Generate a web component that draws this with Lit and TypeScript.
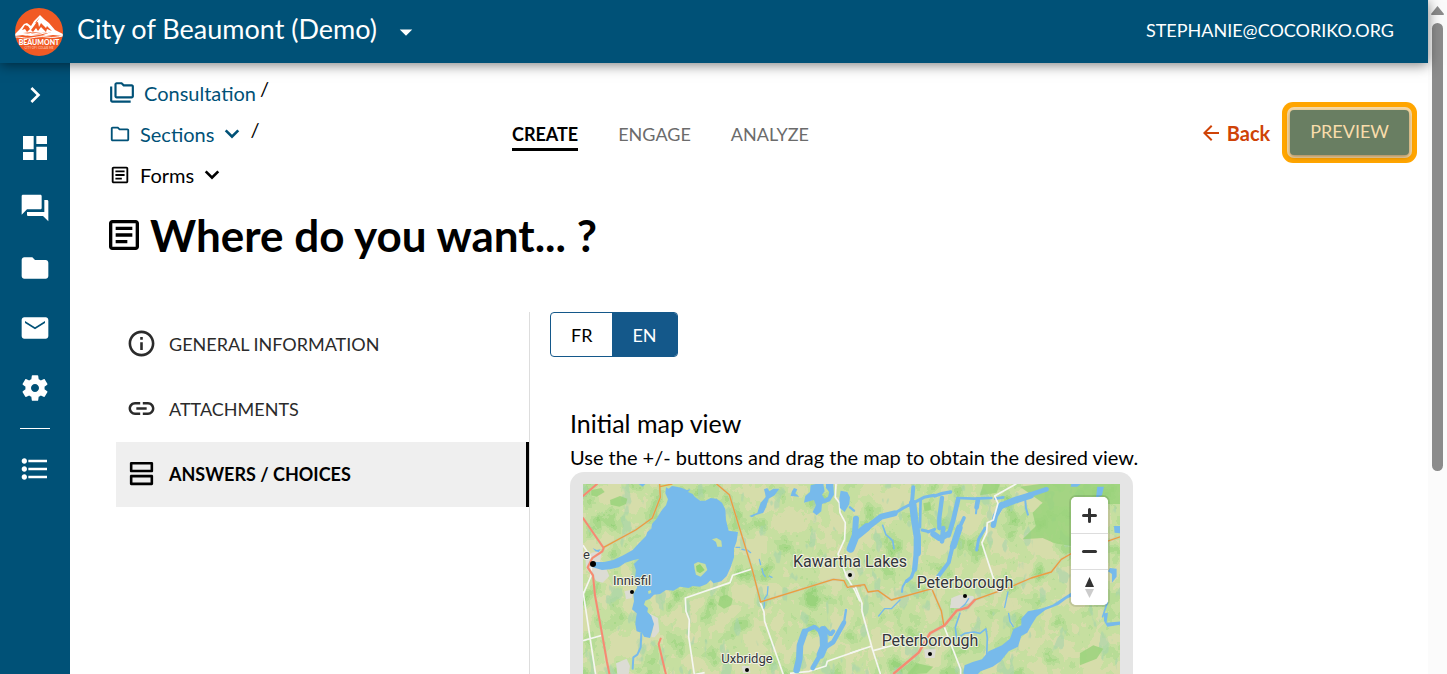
import { LitElement, html, css, svg } from "lit";
import { customElement, property, state } from "lit/decorators.js";
import { classMap } from "lit/directives/class-map.js";

const ICONS: Record<string, string> = {
  chevronRight: "M10 6L8.59 7.41 13.17 12l-4.58 4.59L10 18l6-6z",
  chevronDown: "M16.59 8.09L12 12.67 7.41 8.09 5.8 9.7l6.2 6.2 6.2-6.2z",
  dropDown: "M7 10l5 5 5-5z",
  dashboard: "M3 13h8V3H3v10zm0 8h8v-6H3v6zm10 0h8V11h-8v10zm0-18v6h8V3h-8z",
  forum:
    "M21 6h-2v9H6v2c0 .55.45 1 1 1h11l4 4V7c0-.55-.45-1-1-1zm-4 6V3c0-.55-.45-1-1-1H3c-.55 0-1 .45-1 1v14l4-4h10c.55 0 1-.45 1-1z",
  folder:
    "M10 4H4c-1.1 0-1.99.9-1.99 2L2 18c0 1.1.9 2 2 2h16c1.1 0 2-.9 2-2V8c0-1.1-.9-2-2-2h-8l-2-2z",
  mail: "M20 4H4c-1.1 0-2 .9-2 2v12c0 1.1.9 2 2 2h16c1.1 0 2-.9 2-2V6c0-1.1-.9-2-2-2zm-.5 4.2L12 13 4.5 8.200V6.700l7.500 4.700 7.500-4.700v1.500z",
  settings:
    "M19.14 12.94c.04-.3.06-.61.06-.94 0-.32-.02-.64-.07-.94l2.03-1.58c.18-.14.23-.41.12-.61l-1.92-3.32c-.12-.22-.37-.29-.59-.22l-2.39.96c-.5-.38-1.03-.7-1.62-.94l-.36-2.54c-.04-.24-.24-.41-.48-.41h-3.84c-.24 0-.43.17-.47.41l-.36 2.54c-.59.24-1.13.57-1.62.94l-2.39-.96c-.22-.08-.47 0-.59.22L2.74 8.87c-.12.21-.08.47.12.61l2.03 1.58c-.05.3-.09.63-.09.94s.02.64.07.94l-2.03 1.58c-.18.14-.23.41-.12.61l1.92 3.32c.12.22.37.29.59.22l2.39-.96c.5.38 1.03.7 1.62.94l.36 2.54c.05.24.24.41.48.41h3.84c.24 0 .44-.17.47-.41l.36-2.54c.59-.24 1.13-.56 1.62-.94l2.39.96c.22.08.47 0 .59-.22l1.92-3.32c.12-.22.07-.47-.12-.61l-2.01-1.58zM12 15c-1.65 0-3-1.35-3-3s1.350-3 3-3 3 1.350 3 3-1.350 3-3 3z",
  list: "M4 10c-1.100 0-2 .9-2 2s.9 2 2 2 2-.9 2-2-.9-2-2-2zm0-6c-1.100 0-2 .9-2 2s.9 2 2 2 2-.9 2-2-.9-2-2-2zm0 12c-1.100 0-2 .9-2 2s.9 2 2 2 2-.9 2-2-.9-2-2-2zM7 19h14v-2H7v2zm0-6h14v-2H7v2zm0-8v2h14V5H7z",
  article:
    "M19 5v14H5V5h14m0-2H5c-1.1 0-2 .9-2 2v14c0 1.1.9 2 2 2h14c1.1 0 2-.9 2-2V5c0-1.1-.9-2-2-2z M14 17H7v-2h7v2zm3-4H7v-2h10v2zm0-4H7V7h10v2z",
  folderOutline:
    "M9.170 6l2 2H20v10H4V6h5.170M10 4H4c-1.1 0-1.99.9-1.99 2L2 18c0 1.1.9 2 2 2h16c1.1 0 2-.9 2-2V8c0-1.1-.9-2-2-2h-8l-2-2z",
  folderCopy:
    "M3 6H1v13c0 1.1.9 2 2 2h17v-2H3V6z M21 4h-7l-2-2H7c-1.1 0-1.99.9-1.99 2L5 15c0 1.1.9 2 2 2h14c1.1 0 2-.9 2-2V6c0-1.1-.9-2-2-2zm0 11H7V4h4.170l2 2H21v9z",
  info: "M11 7h2v2h-2zm0 4h2v6h-2zm1-9C6.480 2 2 6.480 2 12s4.480 10 10 10 10-4.480 10-10S17.520 2 12 2zm0 18c-4.410 0-8-3.590-8-8s3.590-8 8-8 8 3.590 8 8-3.590 8-8 8z",
  link: "M3.900 12c0-1.710 1.390-3.100 3.100-3.100h4V7H7c-2.760 0-5 2.240-5 5s2.240 5 5 5h4v-1.900H7c-1.710 0-3.100-1.390-3.100-3.100zM8 13h8v-2H8v2zm9-6h-4v1.900h4c1.710 0 3.100 1.390 3.100 3.100s-1.390 3.100-3.100 3.100h-4V17h4c2.760 0 5-2.240 5-5s-2.240-5-5-5z",
  agenda:
    "M19 15v4H5v-4h14m1-2H4c-.55 0-1 .45-1 1v6c0 .55.45 1 1 1h16c.55 0 1-.45 1-1v-6c0-.55-.45-1-1-1zM19 5v4H5V5h14m1-2H4c-.55 0-1 .45-1 1v6c0 .55.45 1 1 1h16c.55 0 1-.45 1-1V4c0-.55-.45-1-1-1z",
  arrowBack: "M20 11H7.830l5.590-5.590L12 4l-8 8 8 8 1.410-1.410L7.830 13H20v-2z",
};

@customElement("ui-icon")
class UiIcon extends LitElement {
  @property() name = "";
  @property({ type: Number }) size = 24;
  static styles = css`
    :host { display: inline-flex; flex: none; }
    svg { fill: currentColor; display: block; }
  `;
  render() {
    return html`<svg width=${this.size} height=${this.size} viewBox="0 0 24 24" aria-hidden="true">
      <path d=${ICONS[this.name] ?? ""}></path>
    </svg>`;
  }
}

@customElement("city-logo")
class CityLogo extends LitElement {
  static styles = css`
    :host { display: inline-flex; flex: none; }
    svg { display: block; }
    .name { font: 900 7px Lato, sans-serif; fill: #fff; }
    .motto { font: 700 3px Lato, sans-serif; fill: #f9b49a; }
  `;
  render() {
    return html`<svg width="48" height="48" viewBox="0 0 48 48" role="img" aria-label="Beaumont">
      <defs><clipPath id="disc"><circle cx="24" cy="24" r="24"></circle></clipPath></defs>
      <g clip-path="url(#disc)">
        <rect width="48" height="48" fill="#f15a24"></rect>
        <path fill="#fff" d="M0 26L5 21 9 16 12 15 16 18 19 13 25 7 29 11 34 15 40 22 48 26 48 28 38 27 31 28 24 27 16 28 8 27 0 28z"></path>
        <path fill="#f15a24" d="M25 9l-5 6 3-1 1 5 2-4 5 5 1-2 5 5-5-2-1 3-5-5-3 4-2-3-3 4-2-2 3-4zM10 17l-3 5 3-1 2 3 3-3-2-3zM8 25l10-1 8 1 10-1-8 3z"></path>
        <path fill="none" stroke="#fff" stroke-width="1" d="M0 29c8 0 10 2 16 1s10-2 16-1 10 0 16-1M3 26l8 1 6-2 8 1 10-2"></path>
        <text class="name" x="24" y="37" text-anchor="middle">BEAUMONT</text>
        <text class="motto" x="24" y="41" text-anchor="middle">CITY OF I COLAB ME</text>
      </g>
    </svg>`;
  }
}

const WEST_LAKES = [
  "M318 52L326 56 336 48 350 50 366 54 380 60 392 58 384 66 398 72 404 80 420 92 436 92 452 84 470 86 486 98 496 118 498 150 506 182 534 186 530 214 522 236 522 262 512 292 500 318 484 334 460 340 452 330 440 342 420 350 398 348 386 354 360 350 340 362 318 360 300 372 282 374 270 386 256 392 252 404 264 414 262 426 274 438 282 462 276 484 270 504 252 500 246 488 230 484 226 462 230 430 216 418 222 394 220 372 232 352 224 330 228 300 222 282 238 266 222 270 196 278 176 292 150 298 126 300 98 292 102 276 132 276 160 270 190 256 218 240 238 218 258 198 262 186 274 176 276 162 290 146 304 122 318 106 324 88 316 70z",
  "M98 234l12 6 12-2-6 8-10-2z",
  "M236 42h20l-8 8z",
  "M612 58l10-4 6 10 12-8 18 0-14 20-18 10-8 26-8 16-24 8-10 6-8-4 24-10 10-30 16-18z",
  "M702 54l10 4-6 12 12 10-26-2 4-14z",
  "M768 42l22 0 4 22-8 10 8 12 10-6 4-14-10-12 0-12 22 0 2 32-12 20-24 8-2 22-14 12-12-10 10-20-6-16-30 8 4-20 14-12 2-20z",
  "M842 62l20 4 8 16-2 20-14 24-14-12-2-28z",
];

const RICE_LAKE =
  "M340 610l4-24 24-10 28-8 20-24 40-18 24-20 10-28 24-12 0-20 20-22 38-8 36-12 34-22 38-24 22-12 0 10-22 16-30 14-24 18-40 16-26 20-16 26-12 22-18 10-10 32-28 14-24 30-24 16-36 14-22 22z";

const EAST_LAKES = [
  RICE_LAKE,
  "M742 50l20 0-6 26-18 8z",
  "M792 168l20 0 0 22-18-2z",
  "M780 294l20 2 0 24-14 18 0-26-12-8z",
  "M762 430l12-2-4 30 42-4 0 10-40 6-10-18z",
  "M664 42h28l-10 8-20 0z",
];

type Channel = [width: number, d: string];

const WEST_CHANNELS: Channel[] = [
  [6, "M244 490l-2 42-10 22-12 8-2 34"],
  [4, "M528 232l12 0M546 238l10 2M562 240l10 8"],
  [4, "M598 268l4 16M606 296l4 16 6 8M628 318l8 4"],
  [4, "M624 350l-2 24-8 12-2 28"],
  [20, "M734 486l-14 40-2 40-8 34"],
  [12, "M734 484l30-14 14 12 8 20"],
  [24, "M790 480l2 50-10 24"],
  [14, "M780 556l-22 38"],
  [14, "M790 536l30-20 20-36 12-22"],
  [7, "M852 458l6-38"],
  [12, "M798 480l14 14 8-10"],
];

const EAST_CHANNELS: Channel[] = [
  [7, "M0 112l12 10"],
  [18, "M18 146l-4 60"],
  [24, "M2 236l14-36 34-28"],
  [18, "M50 174l44-34 40-10"],
  [9, "M134 130l26-16 28-14 34-18 30-6"],
  [10, "M254 78l24-8 24-4"],
  [12, "M190 52l-4 46"],
  [22, "M188 100l6 50 8 50 0 48"],
  [16, "M200 240l-6 58"],
  [10, "M194 296l-10 26-14 12"],
  [6, "M170 330l-12 20-2 16"],
  [8, "M212 88l-2 84"],
  [13, "M276 84l-8 60 0 30"],
  [9, "M216 180l16 4M234 186l20-8"],
  [18, "M250 192l20 14 24-14"],
  [14, "M276 214l4-40"],
  [14, "M324 90l-14 60-14 46"],
  [8, "M322 84l50 2 52-2"],
  [14, "M384 88l-4 24"],
  [6, "M380 112l-2 18"],
  [11, "M342 144l-14 30"],
  [20, "M328 174l-18 54"],
  [12, "M308 228l-12 50-24 32-8 10"],
  [20, "M452 108l40-16 50-16"],
  [14, "M540 74l50-16"],
  [16, "M456 104l-20 34-6 28"],
  [6, "M526 92l2 22 6 20"],
  [9, "M406 174l-20 34-6 32"],
  [8, "M436 86l24-4"],
  [5, "M98 166l10 28 20 18 4 24"],
  [4, "M150 390l-26 26-20 0-18 22"],
  [4, "M474 366l-10 46"],
  [4, "M476 430l4 24 10 16"],
  [5, "M330 430l-14 42 4 34 24-16 28-4 18 4 18-14 4 28-2 62"],
  [4, "M356 386l-10 16-16 14"],
  [5, "M772 398l-14 42"],
];

const WATER = "#77baeb";
const drawLakes = (shapes: string[]) => shapes.map((d) => svg`<path d=${d} fill=${WATER}></path>`);
const drawChannels = (channels: Channel[]) =>
  channels.map(([w, d]) => svg`<path d=${d} fill="none" stroke=${WATER} stroke-width=${w} stroke-linecap="round" stroke-linejoin="bevel"></path>`);

@customElement("region-map")
class RegionMap extends LitElement {
  static styles = css`
    :host { display: block; position: relative; height: 360px; overflow: hidden; background: #cadfa3; }
    .canvas { display: block; width: 100%; height: 100%; }
    .label { font-family: Roboto, "Open Sans", sans-serif; fill: #33363b; stroke: #f2f3e4; stroke-width: 2px; paint-order: stroke; stroke-linejoin: round; }
    .town { font-size: 13px; }
    .city { font-size: 16px; }
    .controls { position: absolute; top: 13px; right: 12px; width: 37px; display: flex; flex-direction: column; background: #fff; border-radius: 5px; box-shadow: 0 0 0 2px rgba(0, 0, 0, 0.1); overflow: hidden; }
    .control { height: 36px; padding: 0; border: 0; background: #fff; display: flex; align-items: center; justify-content: center; }
    .control + .control { border-top: 1px solid #ddd; }
  `;
  render() {
    return html`
      <svg class="canvas" role="img" aria-label="Map of the Kawartha Lakes region">
        <defs>
          <filter id="land" x="0" y="0" width="100%" height="100%" color-interpolation-filters="sRGB">
            <feTurbulence type="fractalNoise" baseFrequency="0.05 0.04" numOctaves="4" seed="11"></feTurbulence>
            <feColorMatrix values="1 0 0 0 0  1 0 0 0 0  1 0 0 0 0  0 0 0 0 1"></feColorMatrix>
            <feComponentTransfer>
              <feFuncR type="discrete" tableValues=".84 .84 .84 .84 .84 .84 .84 .84 .84 .78 .78 .78 .72 .72 .66 .66 .60 .60 .60 .60"></feFuncR>
              <feFuncG type="discrete" tableValues=".87 .87 .87 .87 .87 .87 .87 .87 .87 .875 .875 .875 .865 .865 .85 .85 .83 .83 .83 .83"></feFuncG>
              <feFuncB type="discrete" tableValues=".67 .67 .67 .67 .67 .67 .67 .67 .67 .63 .63 .63 .59 .59 .54 .54 .49 .49 .49 .49"></feFuncB>
            </feComponentTransfer>
          </filter>
          <filter id="marsh" x="0" y="0" width="100%" height="100%" color-interpolation-filters="sRGB">
            <feTurbulence type="fractalNoise" baseFrequency="0.08 0.04" numOctaves="3" seed="4"></feTurbulence>
            <feColorMatrix values="0 0 0 0 .66  0 0 0 0 .83  0 0 0 0 .67  18 0 0 0 -11.500"></feColorMatrix>
          </filter>
        </defs>
        <rect width="100%" height="100%" filter="url(#land)"></rect>
        <rect width="100%" height="100%" filter="url(#marsh)" opacity=".6"></rect>

        <g transform="scale(.3333) translate(-69 -42)">
          <path fill="#97d279" opacity=".8" d="M150 90l30-12 22 8-4 16-20 8-26-6zM94 60l30-6 10 12-24 14-16-4zM480 380l20-6 18 12-4 20-22 10-18-12z"></path>
          <g fill="#dcdcd4">
            <path d="M76 262l20-14 30-6-6 32 18 20 10 24-20 20-18-4-16-20-16-20z"></path>
            <path d="M268 430l26 14 4 40-14 18-10 0 6-40z"></path>
            <path d="M194 364l26-6-4 26-18 4z"></path>
            <path d="M168 580l32-14 10 22-4 26-34 0z"></path>
            <circle cx="869" cy="315" r="16" opacity=".8"></circle>
            <path d="M545 588l24 0 2 20-22 2z"></path>
          </g>
          <g fill="none" stroke="#f5f6f1" stroke-width="5" stroke-linejoin="round">
            <path d="M69 226l26 40-2 52-24 56"></path>
            <path d="M69 364l38 250M69 512l58-16"></path>
            <path d="M574 298l-56 18-8 22-134 46 2 40 10 26-2 50 18 120M404 614l30-6"></path>
            <path d="M600 396l12 30 2 28 56 160M690 610l58-6 50-16 4-14 98-34"></path>
            <path d="M828 42l-2 40 12 16 2 30 16 30-2 50-20 44 26 68 24 40 16 34"></path>
          </g>
          ${drawLakes(WEST_LAKES)} ${drawChannels(WEST_CHANNELS)}
          <path fill="#c7dfa0" d="M456 208l14-4 14 8 2 18-14 0-4-14zM402 282l12-6 22 6 6 18-20 20-14-6-4-16zM264 364l8-4 2 8-8 4z"></path>
          <path fill="#93d272" d="M408 288l12-6 14 18-14 10-10-6z"></path>
          <g fill="none" stroke-linejoin="round" stroke-linecap="round">
            <g stroke="#c9c4b4" stroke-width="8" opacity=".6">
              <path d="M299 42l2 40-24 62-50 36-96 52M470 42l38 32 68 222 26 100 218-68 32 4 10 20 40-4"></path>
              <path d="M69 78l42-36M69 144l62 90-4 10-30 20-14 28 16 24 6 60 22 120 14 80 8 40"></path>
            </g>
            <path stroke="#eb9f3d" stroke-width="4" d="M300 50l36-8M299 42l2 40-24 62-50 36-96 52M470 42l38 32 68 222 26 100 218-68 32 4 10 20 40-4"></path>
            <path stroke="#f78a70" stroke-width="6" d="M69 78l42-36M69 144l62 90-4 10-30 20-14 28 16 24 6 60 22 120 14 80 8 40M302 506l-6 16 22 92"></path>
          </g>
        </g>

        <g transform="scale(.3333) translate(801 -42)">
          <path fill="#97d279" opacity=".8" d="M510 50l60-8 242 0 0 60-60 0-30 40-28 60-30 26-50-8-36-16-60 4 40-40-10-40 30-30zM400 42l50 0-10 26-50 8zM220 100l20-4 4 24-20 4zM690 550l40-24 30 10-20 30-50 20zM200 580l50 10-20 20-60 4z"></path>
          <path fill="#dcdcd4" d="M304 384l26-10 40 4 6 16-32 10-12 10-32 0zM222 538l36 0-4 26-28 0z"></path>
          <g fill="none" stroke="#f5f6f1" stroke-width="5" stroke-linejoin="round">
            <path d="M396 220l36 110"></path>
            <path d="M16 350l20 50 0 24 32 116 24 74M0 550l66-22M70 542l60-16M282 468l50 130 0 20"></path>
          </g>
          ${drawLakes(EAST_LAKES)} ${drawChannels(EAST_CHANNELS)}
          <g fill="none" stroke-linejoin="round" stroke-linecap="round">
            <path stroke="#f5f6f1" stroke-width="5" d="M498 42l-64 36 10 22-14 50-18 8-2 30-14 30"></path>
            <g stroke="#c9c4b4" opacity=".6">
              <path stroke-width="8" d="M0 350l44-6 10 22 30-4 40 28 122-34M282 468l-8-46-26-60M374 390l100-36 70-30 60-18 30-38 28-16 150-52"></path>
              <path stroke-width="11" d="M132 610l74-62 34-58 44-24 36-44 34-10 20-22"></path>
            </g>
            <path stroke="#eb9f3d" stroke-width="4" d="M0 350l44-6 10 22 30-4 40 28 122-34M282 468l-8-46-26-60M374 390l100-36 70-30 60-18 30-38 28-16 150-52"></path>
            <path stroke="#f78a70" stroke-width="7" d="M132 610l74-62 34-58 44-24 36-44 34-10 20-22"></path>
          </g>
        </g>

        <g fill="#000">
          <circle cx="10" cy="80" r="3"></circle>
          <circle cx="49" cy="108" r="2"></circle>
          <circle cx="267" cy="91" r="2"></circle>
          <circle cx="382" cy="112" r="2"></circle>
          <circle cx="347" cy="170" r="2"></circle>
          <circle cx="164" cy="186" r="2"></circle>
        </g>
        <text class="label town" x="0" y="75" text-anchor="start">e</text>
        <text class="label town" x="49" y="101" text-anchor="middle">Innisfil</text>
        <text class="label town" x="164" y="179" text-anchor="middle">Uxbridge</text>
        <text class="label city" x="267" y="83" text-anchor="middle">Kawartha Lakes</text>
        <text class="label city" x="382" y="104" text-anchor="middle">Peterborough</text>
        <text class="label city" x="347" y="162" text-anchor="middle">Peterborough</text>
      </svg>
      <div class="controls">
        <button class="control" aria-label="Zoom in">
          <svg width="29" height="29" viewBox="0 0 29 29"><path fill="none" stroke="#333" stroke-width="3" stroke-linecap="round" d="M14.500 8.500v12M8.500 14.500h12"></path></svg>
        </button>
        <button class="control" aria-label="Zoom out">
          <svg width="29" height="29" viewBox="0 0 29 29"><path stroke="#333" stroke-width="3" stroke-linecap="round" d="M8.500 14.500h12"></path></svg>
        </button>
        <button class="control" aria-label="Reset bearing to north">
          <svg width="29" height="29" viewBox="0 0 29 29"><path fill="#333" d="M10 14l4.500-10 4.500 10z"></path><path fill="#ccc" d="M10 16l4.500 9 4.500-9z"></path></svg>
        </button>
      </div>
    `;
  }
}

@customElement("app-root")
class AppRoot extends LitElement {
  @state() private lang = "EN";
  @state() private tab = "CREATE";
  @state() private panel = "ANSWERS / CHOICES";

  static styles = css`
    :host { display: flex; height: 100vh; overflow: hidden; background: #fff; color: #000; font-family: Lato, "Open Sans", sans-serif; font-size: 20px; line-height: 24px; }
    * { box-sizing: border-box; }
    a { color: inherit; text-decoration: none; }
    button { font: inherit; color: inherit; border: 0; background: none; padding: 0; cursor: pointer; }
    h1, h2, p, ul { margin: 0; padding: 0; }
    ul { list-style: none; }

    .app { flex: 1; min-width: 0; display: flex; flex-direction: column; }
    .topbar { position: relative; z-index: 1; flex: none; height: 63px; padding: 0 34px 0 15px; display: flex; align-items: center; background: #005177; color: #fff; box-shadow: 0 2px 12px rgba(0, 0, 0, 0.5); }
    .org { display: flex; align-items: center; gap: 14px; font-size: 27px; line-height: 32px; }
    .org-name { padding-bottom: 6px; }
    .account { margin-left: auto; font-size: 18px; padding-bottom: 4px; }

    .body { flex: 1; min-height: 0; display: flex; }
    .rail { flex: none; width: 70px; padding-top: 16px; background: #005177; color: #fff; display: flex; flex-direction: column; align-items: center; gap: 28px; }
    .rail a { display: flex; height: 32px; }
    .rail .expand { margin-bottom: -7px; }
    .rail hr { width: 30px; margin: -4px 0; border: 0; border-top: 1px solid #fff; }

    main { flex: 1; min-width: 0; overflow: hidden; }
    .head { display: grid; grid-template-columns: 403px 1fr auto; padding: 17px 19px 0 39px; }
    .crumbs { display: flex; flex-direction: column; gap: 16px; }
    .crumbs li { display: flex; align-items: center; height: 25px; gap: 4px; }
    .crumbs a { display: flex; align-items: center; gap: 9px; }
    .linked { color: #005177; }
    .slash { padding: 0 0 10px; color: #000; }
    .tabs { display: flex; gap: 40px; align-self: start; padding-top: 42px; font-size: 18px; }
    .tab { color: #6b6b6b; padding-bottom: 2px; border-bottom: 3px solid transparent; }
    .tab.active { color: #000; font-weight: 700; border-color: #000; }
    .actions { display: flex; align-items: center; align-self: start; gap: 20px; padding-top: 30px; }
    .back { display: flex; align-items: center; gap: 4px; color: #cf4307; font-weight: 700; }
    .preview { height: 45px; padding: 0 20px 3px; border-radius: 4px; background: #697e62; color: #f8dcab; font-size: 18px; box-shadow: 0 2px 4px rgba(90, 60, 20, 0.5), 0 0 0 3px #f6d9a6, 0 0 0 8px #ffa500; }

    .title { display: flex; align-items: center; gap: 6px; padding: 22px 34px 0; font-size: 44px; line-height: 52px; font-weight: 700; }
    .columns { display: grid; grid-template-columns: 414px 1fr; padding: 51px 20px 0 46px; }
    .side { border-right: 1px solid #ddd; min-height: 420px; }
    .side a { display: flex; align-items: center; gap: 12px; height: 65px; padding: 0 0 2px 10px; color: #2b2b2b; font-size: 18px; }
    .side a.active { background: #efefef; color: #000; font-weight: 700; border-right: 3px solid #000; }
    .content { padding-left: 20px; }
    .langs { display: inline-flex; border: 1px solid #14588a; border-radius: 4px; overflow: hidden; }
    .lang { height: 43px; padding: 0 20px; font-size: 18px; }
    .lang.active { background: #14588a; color: #fff; }
    .view { padding: 48px 20px 0; }
    .view h2 { font-size: 25px; line-height: 36px; font-weight: 400; }
    .view p { padding: 4px 0 3px; }
    .frame { width: 563px; max-width: 100%; padding: 12px 13px; border-radius: 14px; background: #e5e5e5; }

    .scrollbar { flex: none; width: 19px; padding-top: 6px; background: #fbfbfb; display: flex; flex-direction: column; align-items: center; gap: 8px; }
    .thumb { width: 11px; height: 67%; border-radius: 6px; background: #8b8b8b; }
  `;

  render() {
    return html`
      <div class="app">
        <header class="topbar">
          <div class="org">
            <city-logo></city-logo>
            <span class="org-name">City of Beaumont (Demo)</span>
            <ui-icon name="dropDown" size="30"></ui-icon>
          </div>
          <a class="account" href="#account">STEPHANIE@COCORIKO.ORG</a>
        </header>
        <div class="body">
          <nav class="rail" aria-label="Main">
            <a class="expand" href="#expand" aria-label="Expand"><ui-icon name="chevronRight" size="32"></ui-icon></a>
            ${["dashboard", "forum", "folder", "mail", "settings"].map(
              (n) => html`<a href="#${n}" aria-label=${n}><ui-icon name=${n} size="32"></ui-icon></a>`,
            )}
            <hr />
            <a href="#list" aria-label="list"><ui-icon name="list" size="32"></ui-icon></a>
          </nav>
          <main>
            <div class="head">
              <ul class="crumbs">
                <li class="linked"><a href="#consultation"><ui-icon name="folderCopy" size="26"></ui-icon>Consultation</a><span class="slash">/</span></li>
                <li class="linked"><a href="#sections"><ui-icon name="folderOutline" size="22"></ui-icon>Sections</a><ui-icon name="chevronDown" size="28"></ui-icon><span class="slash">/</span></li>
                <li><a href="#forms"><ui-icon name="article" size="22"></ui-icon>Forms</a><ui-icon name="chevronDown" size="28"></ui-icon></li>
              </ul>
              <nav class="tabs" aria-label="Steps">
                ${["CREATE", "ENGAGE", "ANALYZE"].map(
                  (t) => html`<button class=${classMap({ tab: true, active: t === this.tab })} @click=${() => (this.tab = t)}>${t}</button>`,
                )}
              </nav>
              <div class="actions">
                <a class="back" href="#back"><ui-icon name="arrowBack" size="24"></ui-icon>Back</a>
                <button class="preview">PREVIEW</button>
              </div>
            </div>
            <h1 class="title"><ui-icon name="article" size="40"></ui-icon>Where do you want... ?</h1>
            <div class="columns">
              <nav class="side" aria-label="Form settings">
                ${[
                  ["info", "GENERAL INFORMATION"],
                  ["link", "ATTACHMENTS"],
                  ["agenda", "ANSWERS / CHOICES"],
                ].map(
                  ([icon, label]) => html`<a href="#${icon}" class=${classMap({ active: label === this.panel })} @click=${() => (this.panel = label)}>
                    <ui-icon name=${icon} size="31"></ui-icon>${label}</a>`,
                )}
              </nav>
              <section class="content">
                <div class="langs">
                  ${["FR", "EN"].map(
                    (l) => html`<button class=${classMap({ lang: true, active: l === this.lang })} @click=${() => (this.lang = l)}>${l}</button>`,
                  )}
                </div>
                <div class="view">
                  <h2>Initial map view</h2>
                  <p>Use the +/- buttons and drag the map to obtain the desired view.</p>
                  <div class="frame"><region-map></region-map></div>
                </div>
              </section>
            </div>
          </main>
        </div>
      </div>
      <div class="scrollbar" aria-hidden="true">
        <svg width="13" height="9" viewBox="0 0 13 9"><path fill="#8b8b8b" d="M6.500 0L13 8q0 1-1 1H1q-1 0-1-1z"></path></svg>
        <div class="thumb"></div>
      </div>
    `;
  }
}
